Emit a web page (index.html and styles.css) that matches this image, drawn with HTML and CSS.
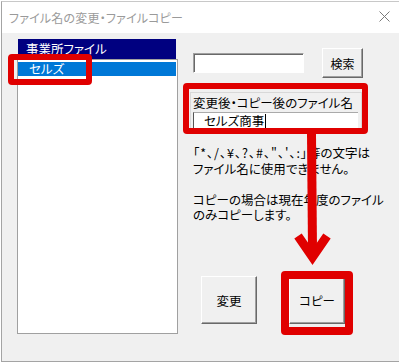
FILE: index.html
```html
<!DOCTYPE html>
<html lang="ja">
<head>
<meta charset="utf-8">
<link rel="stylesheet" href="styles.css">
</head>
<body>
<div class="dialog">
  <div class="titlebar">
    <span class="title">ファイル名の変更・ファイルコピー</span>
    <svg class="close" width="11" height="11" viewBox="0 0 11 11"><path d="M0.5 0.5 L10.5 10.5 M10.5 0.5 L0.5 10.5" stroke="#7a7a7a" stroke-width="1" fill="none"/></svg>
  </div>
  <div class="client">
    <div class="leftcol">
      <div class="listhead">事業所ファイル</div>
      <div class="listbox">
        <div class="row selected">セルズ</div>
      </div>
    </div>
    <div class="rightcol">
      <div class="searchrow">
        <div class="field"></div>
        <div class="btn btn-search">検索</div>
      </div>
      <div class="group">
        <div class="label">変更後・コピー後のファイル名</div>
        <div class="nameinput"><span>セルズ商事</span><i class="caret"></i></div>
      </div>
      <div class="note">
        <div class="line"><span class="chars">「*、/、¥、?、#、"、'、:」</span>等の文字は</div>
        <div class="line">ファイル名に使用できません。</div>
        <div class="line blank"></div>
        <div class="line">コピーの場合は現在年度のファイル</div>
        <div class="line">のみコピーします。</div>
      </div>
      <div class="actions">
        <div class="btn btn-action">変更</div>
        <div class="btn btn-action">コピー</div>
      </div>
    </div>
  </div>
</div>
<div class="mark mark-list"></div>
<div class="mark mark-name"></div>
<div class="mark mark-copy"></div>
<svg class="arrow" width="399" height="363" viewBox="0 0 399 363">
  <line x1="311.5" y1="134" x2="312.5" y2="250" stroke="#e00000" stroke-width="9"/>
  <polyline points="298,236 312.5,257 327,236" fill="none" stroke="#e00000" stroke-width="9" stroke-linejoin="miter"/>
</svg>
</body>
</html>
```

FILE: styles.css
```css
* { box-sizing: border-box; }
html, body { margin: 0; padding: 0; }
body {
  position: relative;
  width: 399px;
  height: 363px;
  background: #ffffff;
  font-family: "Noto Sans CJK JP", "Noto Sans", sans-serif;
  font-feature-settings: "palt";
  font-size: 12px;
  color: #000;
  overflow: hidden;
}
.dialog {
  margin: 1px 0 0 1px;
  width: 399px;
  height: 361px;
  border: 1px solid #a4a4a4;
  border-top-color: #c8c8c8;
  background: #f0f0f0;
  display: flex;
  flex-direction: column;
}
.titlebar {
  height: 31px;
  background: #ffffff;
  display: flex;
  align-items: center;
  justify-content: space-between;
  padding: 0 9px 0 7px;
  flex: none;
}
.title {
  color: #9a9a9a;
  font-size: 12px;
  letter-spacing: 0.2px;
  margin-top: -1px;
}
.close { margin-top: -2px; }
.client {
  flex: 1;
  display: flex;
  padding: 6px 0 0 15px;
}
.leftcol {
  width: 161px;
  display: flex;
  flex-direction: column;
}
.listhead {
  height: 20px;
  margin: 0 2px 0 1px;
  background: #000080;
  color: #fff;
  font-size: 12.5px;
  line-height: 20px;
  padding-left: 8px;
}
.listbox {
  height: 275px;
  border: 1px solid #a0a0a0;
  background: #fff;
  padding: 2px 1px 0 0;
}
.row {
  height: 14px;
  line-height: 14px;
  padding-left: 11px;
  font-size: 12.5px;
}
.row.selected { background: #0078d7; color: #fff; }
.rightcol {
  margin-left: 12px;
  width: 180px;
  display: flex;
  flex-direction: column;
}
.searchrow {
  display: flex;
  align-items: center;
  margin-top: 9px;
  height: 30px;
}
.field {
  margin-left: 3px;
  width: 111px;
  height: 20px;
  background: #fff;
  border: 1px solid;
  border-color: #a0a0a0 #ffffff #ffffff #a0a0a0;
  box-shadow: inset 1px 1px 0 #696969;
}
.btn {
  background: #f0f0f0;
  border: 1px solid;
  border-color: #ffffff #696969 #696969 #ffffff;
  box-shadow: inset -1px -1px 0 #a0a0a0;
  display: flex;
  align-items: center;
  justify-content: center;
  font-size: 12px;
}
.btn-search {
  margin-left: 18px;
  width: 41px;
  height: 30px;
}
.group {
  margin-top: 14px;
  width: 172px;
  height: 40px;
  border: 1px solid #d8d8d8;
  border-bottom: none;
  padding: 2px 0 0 2px;
}
.label {
  font-size: 12.5px;
  line-height: 16px;
  height: 17px;
}
.nameinput {
  width: 165px;
  height: 19px;
  background: #fff;
  border-left: 1px solid #555;
  border-top: 1px solid #aaa;
  border-bottom: 2px solid #000;
  padding-left: 10px;
  font-size: 12.5px;
  line-height: 16px;
  display: flex;
  align-items: center;
}
.caret {
  display: inline-block;
  width: 1px;
  height: 14px;
  background: #000;
  margin-left: 1px;
}
.note {
  margin-top: 13px;
  padding-left: 3px;
  font-size: 12.5px;
  white-space: nowrap;
}
.line { height: 15.5px; line-height: 15.5px; }
.chars { letter-spacing: 0.9px; }
.actions {
  margin-top: 53.5px;
  display: flex;
  padding-left: 11px;
  gap: 32px;
}
.btn-action {
  width: 56px;
  height: 48px;
  font-size: 12.5px;
}
.mark {
  position: absolute;
  border: 6px solid #e00000;
  border-radius: 4px;
}
.mark-list { left: 8px; top: 54px; width: 84px; height: 31px; }
.mark-name { left: 183px; top: 83px; width: 185px; height: 51px; }
.mark-copy { left: 281px; top: 271px; width: 72px; height: 64px; border-width: 8px; }
.arrow { position: absolute; left: 0; top: 0; pointer-events: none; }
```
